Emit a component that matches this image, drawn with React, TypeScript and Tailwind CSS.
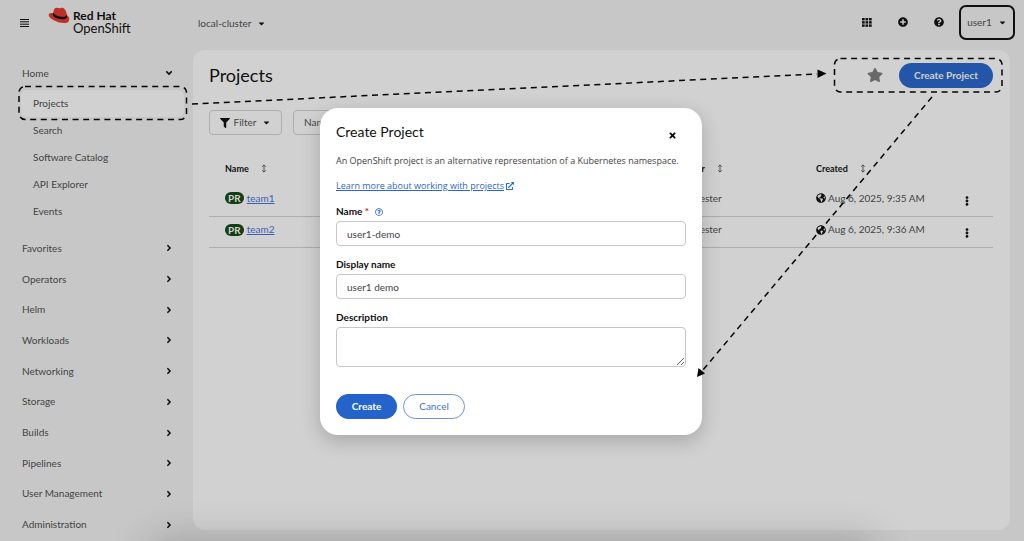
import React, { useState } from "react";
import {
  FaCaretDown,
  FaFilter,
  FaGlobeAmericas,
  FaPlusCircle,
  FaQuestionCircle,
  FaRegQuestionCircle,
  FaStar,
  FaTimes,
  FaEllipsisV,
  FaExternalLinkAlt,
  FaAngleDown,
  FaAngleRight,
} from "react-icons/fa";

const homeLinks = ["Projects", "Search", "Software Catalog", "API Explorer", "Events"];

const sections = [
  "Favorites",
  "Operators",
  "Helm",
  "Workloads",
  "Networking",
  "Storage",
  "Builds",
  "Pipelines",
  "User Management",
  "Administration",
];

const projects = [
  { name: "team1", requester: "No requester", created: "Aug 6, 2025, 9:35 AM" },
  { name: "team2", requester: "No requester", created: "Aug 6, 2025, 9:36 AM" },
];

function HatLogo() {
  return (
    <svg viewBox="0 0 66 50" className="-mt-0.5 h-[17px] w-[22px]" aria-hidden="true">
      <path
        d="M15 20C17 11 18 3 24 2c5-2 8 2 13 1 5-1 8-2 12 2 4 3 7 13 8 19 7 5 9 12 5 18-5 8-20 6-31 3C17 41 2 32 2 23c0-5 7-7 13-5z"
        fill="#bf3026"
      />
      <path
        d="M14 21c2 10 15 14 28 15 9 1 15-2 15-9l-2-5c0 6-4 8-12 7-13-1-24-5-27-13z"
        fill="#0a0a0a"
      />
    </svg>
  );
}

function SortIcon() {
  return (
    <svg viewBox="0 0 6 10" className="h-[9px] w-[6px]" fill="none" stroke="#444" strokeWidth="1" aria-hidden="true">
      <path d="M3 1v8M1 3l2-2 2 2M1 7l2 2 2-2" />
    </svg>
  );
}

function GridIcon() {
  return (
    <svg viewBox="0 0 10 9" className="h-[9px] w-[10px]" fill="#101010" aria-hidden="true">
      {[0, 3.5, 7].map((x) =>
        [0, 3.2, 6.4].map((y) => <rect key={`${x}-${y}`} x={x} y={y} width="2.7" height="2.4" />)
      )}
    </svg>
  );
}

function Masthead() {
  return (
    <header className="flex h-[50px] shrink-0 items-center pr-[9px] pl-5">
      <button aria-label="Toggle navigation" className="-mt-1 flex w-7 text-[#101010]">
        <svg viewBox="0 0 9 8" className="h-2 w-[9px]" stroke="#101010" strokeWidth="1" aria-hidden="true">
          <path d="M0 .5h9M0 2.8h9M0 5.2h9M0 7.500h9" />
        </svg>
      </button>
      <a href="#home" className="-mt-1.5 flex w-[150px] items-start gap-[3px] text-[#101010]">
        <HatLogo />
        <span className="leading-[13px]">
          <strong className="block text-[12px]">Red Hat</strong>
          <span className="block text-[13px]">OpenShift</span>
        </span>
      </a>
      <button className="-mt-1 flex items-center gap-1.5 text-[10px]">
        local-cluster
        <FaCaretDown className="size-[9px] text-[#101010]" />
      </button>
      <div className="-mt-1.5 ml-auto flex items-center text-[#101010]">
        <button aria-label="Applications"><GridIcon /></button>
        <button aria-label="Add" className="ml-[26px]"><FaPlusCircle className="size-[10px]" /></button>
        <button aria-label="Help" className="ml-[26px]"><FaQuestionCircle className="size-[10px]" /></button>
        <button className="ml-[15px] flex h-[35px] w-14 items-center justify-center gap-1.5 rounded-[7px] border-2 border-[#101010] text-[10px] text-[#444]">
          user1
          <FaCaretDown className="size-[9px] text-[#101010]" />
        </button>
      </div>
    </header>
  );
}

function Sidebar() {
  return (
    <nav aria-label="Main" className="w-[193px] shrink-0 pt-[9px] text-[10px]">
      <button className="flex h-7 w-full items-center justify-between pr-[19px] pl-[22px]">
        Home
        <FaAngleDown className="size-[10px] text-[#101010]" />
      </button>
      <ul className="mt-[3px] mb-2">
        {homeLinks.map((label, i) =>
          i === 0 ? (
            <li key={label} className="mr-[9px] ml-[21px]">
              <a href="#projects" aria-current="page" className="flex h-[27px] items-center rounded-md bg-[#d1d1d1] pl-3">
                {label}
              </a>
            </li>
          ) : (
            <li key={label}>
              <a href="#section" className="flex h-[27px] items-center pl-[33px]">{label}</a>
            </li>
          )
        )}
      </ul>
      <ul className="grid h-[307px] auto-rows-fr">
        {sections.map((label) => (
          <li key={label}>
            <button className="flex h-full w-full items-center justify-between pr-[19px] pl-[22px]">
              {label}
              <FaAngleRight className="size-[10px] text-[#101010]" />
            </button>
          </li>
        ))}
      </ul>
    </nav>
  );
}

function ProjectTable() {
  return (
    <table className="mt-[19px] w-full table-fixed text-left text-[10px]">
      <colgroup>
        <col className="w-[56%]" />
        <col className="w-[152px]" />
        <col />
        <col className="w-[43px]" />
      </colgroup>
      <thead>
        <tr className="h-[31px] text-[9px] text-[#101010]">
          {["Name", "Requester", "Created"].map((title) => (
            <th key={title} className="pb-0.5 pl-4 font-bold">
              <span className="flex items-center gap-3">
                {title}
                <SortIcon />
              </span>
            </th>
          ))}
          <th aria-label="Actions" />
        </tr>
      </thead>
      <tbody>
        {projects.map((p) => (
          <tr key={p.name} className="h-[31px] border-b border-[#adadad]">
            <td className="pb-1 pl-4">
              <span className="flex items-center gap-[3px]">
                <span className="rounded-full bg-[#153d14] px-[3px] text-[10px] leading-3 font-bold text-[#d1d1d1]">PR</span>
                <a href="#project" className="text-[#3b5fb5] underline">{p.name}</a>
              </span>
            </td>
            <td className="pb-1 pl-4">{p.requester}</td>
            <td className="pb-1 pl-4">
              <span className="flex items-center gap-0.5">
                <FaGlobeAmericas className="size-[10px] text-[#101010]" />
                {p.created}
              </span>
            </td>
            <td className="pt-0.5">
              <button aria-label={`Actions for ${p.name}`} className="ml-3 flex">
                <FaEllipsisV className="size-[10px] text-[#101010]" />
              </button>
            </td>
          </tr>
        ))}
      </tbody>
    </table>
  );
}

function Field({ id, label, value, required }: { id: string; label: string; value: string; required?: boolean }) {
  const [text, setText] = useState(value);
  return (
    <div className="mb-[11px]">
      <div className="flex h-[17px] items-center gap-[6px] pb-0.5">
        <label htmlFor={id} className="font-bold text-[#101010]">
          {label}
          {required && <span className="text-[#b1380b]"> *</span>}
        </label>
        {required && (
          <button type="button" aria-label="More information">
            <FaRegQuestionCircle className="size-2 text-[#2a66cf]" />
          </button>
        )}
      </div>
      <input
        id={id}
        value={text}
        onChange={(e) => setText(e.target.value)}
        className="block h-[25px] w-full rounded-[4px] border border-[#c7c7c7] bg-white px-[10px] outline-none"
      />
    </div>
  );
}

function CreateDialog() {
  return (
    <div className="absolute inset-x-0 top-[108px] flex justify-center pr-0.5">
      <div
        role="dialog"
        aria-labelledby="dialog-title"
        className="w-[382px] rounded-[18px] bg-white px-4 pt-[15px] pb-4 text-[10px] shadow-[0_6px_20px_rgba(0,0,0,0.2)]"
      >
        <div className="flex h-5 items-start justify-between">
          <h2 id="dialog-title" className="text-[14px] leading-[18px] text-[#101010]">Create Project</h2>
          <button aria-label="Close" className="mt-2 mr-[9px]"><FaTimes className="size-[9px] text-black" /></button>
        </div>
        <p className="mt-[10px] font-['Open_Sans',sans-serif] text-[9px] leading-4">
          An OpenShift project is an alternative representation of a Kubernetes namespace.
        </p>
        <a
          href="#learn"
          className="mt-[9px] mb-[10px] flex items-center gap-0.5 font-['Open_Sans',sans-serif] text-[9px] leading-4 text-[#2a66cf] underline"
        >
          Learn more about working with projects
          <FaExternalLinkAlt className="size-2" />
        </a>
        <form onSubmit={(e) => e.preventDefault()}>
          <Field id="name" label="Name" value="user1-demo" required />
          <Field id="display-name" label="Display name" value="user1 demo" />
          <label htmlFor="description" className="flex h-[17px] items-center pb-0.5 font-bold text-[#101010]">Description</label>
          <textarea id="description" className="block h-10 w-full resize rounded-[4px] border border-[#c7c7c7] outline-none" />
          <div className="mt-[27px] flex gap-[6px]">
            <button className="h-[25px] w-[61px] rounded-full bg-[#2463c9] font-bold text-white">Create</button>
            <button type="button" className="h-[25px] w-[62px] rounded-full border border-[#6f93dc] text-[#3f6fd0]">Cancel</button>
          </div>
        </form>
      </div>
    </div>
  );
}

function Annotations() {
  return (
    <svg
      viewBox="0 0 1024 541"
      className="pointer-events-none absolute top-0 left-0 w-full"
      fill="none"
      stroke="#050505"
      strokeWidth="1.5"
      strokeDasharray="6 4.6"
      aria-hidden="true"
    >
      <rect x="19" y="86.500" width="167.500" height="33" rx="6" />
      <rect x="834.500" y="58.500" width="167.500" height="33.500" rx="6" />
      <path d="M192 104L817 74" />
      <path d="M932 97L703 370" />
      <path d="M817.500 69.500v8.500l9-4.500z" fill="#050505" stroke="none" />
      <path d="M697 377l1.500-9 6.500 5.500z" fill="#050505" stroke="none" />
    </svg>
  );
}

export default function App() {
  return (
    <div className="relative flex min-h-screen flex-col overflow-hidden bg-[#c7c7c7] font-['Lato',sans-serif] text-[#444]">
      <Masthead />
      <div className="flex flex-1">
        <Sidebar />
        <main className="mr-[14px] mb-[11px] flex-1 rounded-xl bg-[#d1d1d1] pt-2 pr-[17px] pl-4">
          <div className="flex h-[34px] items-center justify-between">
            <h1 className="text-[18px] leading-5 text-[#101010]">Projects</h1>
            <div className="flex items-center gap-4">
              <button aria-label="Add to favorites"><FaStar className="size-4 text-[#696969]" /></button>
              <button className="h-[25px] w-[94px] rounded-full bg-[#2356a8] text-[10px] font-bold text-[#d1d1d1]">Create Project</button>
            </div>
          </div>
          <div className="mt-[18px] flex gap-[11px] text-[10px]">
            <button className="flex h-[25px] w-[73px] items-center justify-center gap-1 rounded-[4px] border border-[#adadad]">
              <FaFilter className="size-[10px] text-[#101010]" />
              Filter
              <FaCaretDown className="ml-0.5 size-[9px] text-[#101010]" />
            </button>
            <button className="flex h-[25px] w-[73px] items-center gap-2 rounded-[4px] border border-[#adadad] px-[10px]">
              Name
              <FaCaretDown className="size-[9px] text-[#101010]" />
            </button>
          </div>
          <ProjectTable />
        </main>
      </div>
      <div className="pointer-events-none absolute top-full right-[150px] left-[150px] h-10 shadow-[0_0_40px_rgba(0,0,0,0.22)]" />
      <CreateDialog />
      <Annotations />
    </div>
  );
}
